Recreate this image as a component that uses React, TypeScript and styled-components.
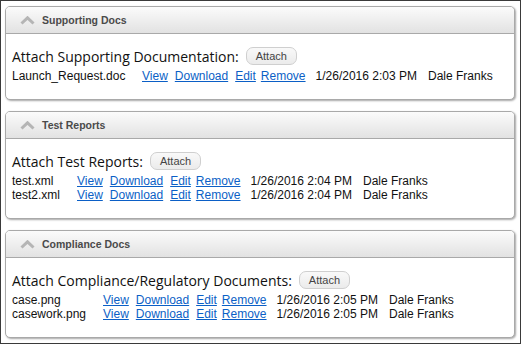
import React from "react";
import styled, { createGlobalStyle } from "styled-components";

const Global = createGlobalStyle`
  html, body { margin: 0; padding: 0; background: #fff; }
  body { font-family: Arial, "Liberation Sans", sans-serif; }
  * { box-sizing: border-box; }
`;

const Frame = styled.div`
  width: 521px;
  height: 344px;
  border: 1px solid #3a3a3a;
  padding: 5px 5px 0 4px;
  display: flex;
  flex-direction: column;
  gap: 11px;
  background: #fff;
`;

const Panel = styled.section`
  border: 1px solid #a9a9a9;
  border-radius: 5px;
  box-shadow: 1px 1px 2px rgba(0, 0, 0, 0.35);
  background: #fff;
  overflow: hidden;
`;

const Header = styled.div`
  height: 27px;
  display: flex;
  align-items: center;
  gap: 7px;
  padding-left: 14px;
  background: linear-gradient(#fbfbfb, #e2e2e2);
  border-bottom: 1px solid #a9a9a9;
  font-family: Arial, "Liberation Sans", sans-serif;
  font-weight: bold;
  font-size: 10.5px;
  color: #4a4a4a;
`;

const Body = styled.div`
  padding: 11px 6px 16px 6px;
`;

const AttachLine = styled.div`
  display: flex;
  align-items: center;
  gap: 7px;
  height: 22px;
  margin-bottom: 2px;
  font-family: "Open Sans", "Noto Sans", sans-serif;
  font-size: 14px;
  color: #111;
`;

const AttachButton = styled.button`
  height: 18px;
  padding: 0 9px;
  border: 1px solid #cfcfcf;
  border-radius: 7px;
  background: linear-gradient(#f9f9f9, #ebebeb);
  font-family: Arial, "Liberation Sans", sans-serif;
  font-size: 11px;
  color: #444;
  line-height: 16px;
`;

const Files = styled.div<{ $nameWidth: number }>`
  display: grid;
  grid-template-columns: ${(p) => p.$nameWidth}px auto auto auto auto auto 1fr;
  font-family: Arial, "Liberation Sans", sans-serif;
  font-size: 12px;
  line-height: 14px;
  color: #111;
  justify-content: start;
`;

const Cell = styled.span<{ $pad?: number }>`
  padding-right: ${(p) => p.$pad ?? 0}px;
  white-space: nowrap;
`;

const Link = styled.a<{ $pad?: number }>`
  color: #0b5fc6;
  text-decoration: underline;
  padding-right: ${(p) => p.$pad ?? 7}px;
  white-space: nowrap;
  cursor: pointer;
`;

const Chevron = () => (
  <svg width="15" height="9" viewBox="0 0 15 9">
    <path d="M1.5 7.5 L7.5 1.8 L13.5 7.5" fill="none" stroke="#b5b5b5" strokeWidth="3" />
  </svg>
);

type FileRow = { name: string; date: string; user: string };

const sections: { title: string; label: string; nameWidth: number; files: FileRow[] }[] = [
  {
    title: "Supporting Docs",
    label: "Attach Supporting Documentation:",
    nameWidth: 130,
    files: [{ name: "Launch_Request.doc", date: "1/26/2016 2:03 PM", user: "Dale Franks" }],
  },
  {
    title: "Test Reports",
    label: "Attach Test Reports:",
    nameWidth: 65,
    files: [
      { name: "test.xml", date: "1/26/2016 2:04 PM", user: "Dale Franks" },
      { name: "test2.xml", date: "1/26/2016 2:04 PM", user: "Dale Franks" },
    ],
  },
  {
    title: "Compliance Docs",
    label: "Attach Compliance/Regulatory Documents:",
    nameWidth: 91,
    files: [
      { name: "case.png", date: "1/26/2016 2:05 PM", user: "Dale Franks" },
      { name: "casework.png", date: "1/26/2016 2:05 PM", user: "Dale Franks" },
    ],
  },
];

export default function App() {
  return (
    <>
      <Global />
      <Frame>
        {sections.map((s) => (
          <Panel key={s.title}>
            <Header>
              <Chevron />
              <span>{s.title}</span>
            </Header>
            <Body>
              <AttachLine>
                <span>{s.label}</span>
                <AttachButton>Attach</AttachButton>
              </AttachLine>
              <Files $nameWidth={s.nameWidth}>
                {s.files.map((f) => (
                  <React.Fragment key={f.name}>
                    <Cell>{f.name}</Cell>
                    <Link>View</Link>
                    <Link>Download</Link>
                    <Link $pad={5}>Edit</Link>
                    <Link $pad={10}>Remove</Link>
                    <Cell $pad={11}>{f.date}</Cell>
                    <Cell>{f.user}</Cell>
                  </React.Fragment>
                ))}
              </Files>
            </Body>
          </Panel>
        ))}
      </Frame>
    </>
  );
}
